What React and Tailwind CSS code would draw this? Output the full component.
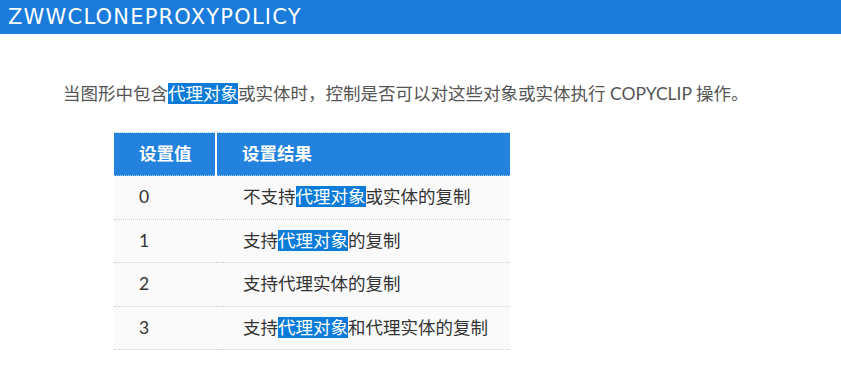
const Hl = ({ children }) => (
  <span className="bg-[#0b7bd9] text-white">{children}</span>
);

const rows = [
  { v: "0", r: <>不支持<Hl>代理对象</Hl>或实体的复制</> },
  { v: "1", r: <>支持<Hl>代理对象</Hl>的复制</> },
  { v: "2", r: <>支持代理实体的复制</> },
  { v: "3", r: <>支持<Hl>代理对象</Hl>和代理实体的复制</> },
];

export default function App() {
  return (
    <div className="w-[841px] h-[366px] bg-white overflow-hidden">
      <div className="h-[34px] bg-[#1a7bdb] px-2 flex items-center">
        <h1 className="text-white text-[21px] leading-none tracking-[1.2px] font-['DejaVu_Sans',sans-serif]">
          ZWWCLONEPROXYPOLICY
        </h1>
      </div>

      <p className="mt-[47px] ml-[63px] text-[17.5px] leading-[26px] text-[#555] font-['Lato','Noto_Sans_CJK_SC',sans-serif]">
        当图形中包含<Hl>代理对象</Hl>或实体时，控制是否可以对这些对象或实体执行 COPYCLIP 操作。
      </p>

      <table className="mt-[25px] ml-[114px] w-[396px] border-collapse text-[17.5px] font-['Lato','Noto_Sans_CJK_SC',sans-serif]">
        <thead>
          <tr className="h-[43px] bg-[#2382de] text-white border-y border-dotted border-[#9cc6ee]">
            <th className="w-[102px] pl-[25px] text-left font-bold border-r-2 border-white">设置值</th>
            <th className="pl-[25px] text-left font-bold">设置结果</th>
          </tr>
        </thead>
        <tbody>
          {rows.map((row) => (
            <tr key={row.v} className="h-[43.5px] bg-[#fafafa] text-[#333] border-b border-dotted border-[#ccc]">
              <td className="pl-[25px]">{row.v}</td>
              <td className="pl-[27px]">{row.r}</td>
            </tr>
          ))}
        </tbody>
      </table>
    </div>
  );
}
